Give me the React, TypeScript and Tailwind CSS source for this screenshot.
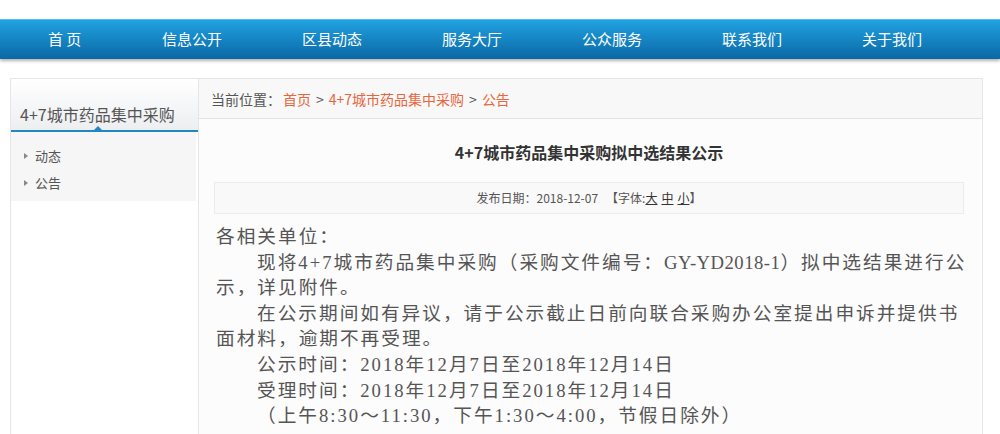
import type { ReactNode } from "react";

const navItems = ["信息公开", "区县动态", "服务大厅", "公众服务", "联系我们", "关于我们"];

const body: { text: ReactNode; indent: boolean }[] = [
  { text: "各相关单位：", indent: false },
  {
    text: (
      <>
        现将4+7城市药品集中采购（采购文件编号：<span className="tracking-[0.5px]">GY-YD2018-1</span>）拟中选结果进行公示，详见附件。
      </>
    ),
    indent: true,
  },
  { text: "在公示期间如有异议，请于公示截止日前向联合采购办公室提出申诉并提供书面材料，逾期不再受理。", indent: true },
  { text: "公示时间：2018年12月7日至2018年12月14日", indent: true },
  { text: "受理时间：2018年12月7日至2018年12月14日", indent: true },
  { text: "（上午8:30～11:30，下午1:30～4:00，节假日除外）", indent: true },
];

export default function App() {
  return (
    <div className="w-[1000px] h-[434px] overflow-hidden bg-white font-['Noto_Sans_CJK_SC',sans-serif]">
      {/* Top navigation */}
      <div className="pt-[19px]">
        <div className="h-[40px] flex items-center bg-linear-to-b from-[#20a2e2] to-[#0b68a4] border-t border-[#5bbbea] shadow-[0_2px_3px_rgba(0,0,0,0.3)] text-white text-[15px]">
          <div className="w-[122px] pl-[48px]">首 页</div>
          {navItems.map((n) => (
            <div key={n} className="w-[140px] text-center">{n}</div>
          ))}
        </div>
      </div>

      {/* Main box */}
      <div className="mt-[19px] ml-[10px] w-[973px] h-[400px] flex border-t border-l border-r border-[#e6e6e6]">
        {/* Sidebar */}
        <div className="w-[188px] border-r border-[#e6e6e6] bg-white">
          <div className="relative h-[53px] flex items-end pl-[9px] pb-[4px] bg-linear-to-b from-[#ffffff] to-[#eceef0] border-b-2 border-[#2387c4]">
            <span className="text-[16px] leading-[24px] text-[#555]">4+7城市药品集中采购</span>
            <span className="absolute left-[83px] bottom-0 w-0 h-0 border-x-[4px] border-x-transparent border-b-[4px] border-b-[#2387c4]" />
          </div>
          <div className="bg-[#f6f6f6] pt-[10px] pb-[5px] mr-[2px]">
            {["动态", "公告"].map((s) => (
              <div key={s} className="h-[27px] flex items-center text-[13px] text-[#555]">
                <span className="ml-[13px] w-0 h-0 border-y-[3px] border-y-transparent border-l-[4px] border-l-[#888]" />
                <span className="ml-[7px]">{s}</span>
              </div>
            ))}
          </div>
        </div>

        {/* Content */}
        <div className="flex-1 bg-[#fcfcfc]">
          <div className="h-[40px] flex items-center pl-[12px] pt-[2px] bg-[#f8f8f8] border-b border-[#e2e2e2] text-[14px] text-[#555]">
            <span>当前位置：</span>
            <span className="ml-[2px] text-[#e8663d]">首页</span>
            <span className="mx-[5px]">&gt;</span>
            <span className="text-[#e8663d]">4+7城市药品集中采购</span>
            <span className="mx-[5px]">&gt;</span>
            <span className="text-[#e8663d]">公告</span>
          </div>

          <div className="pl-[15px]">
            <h1 className="w-[750px] pt-[21px] mb-[18px] text-center text-[16px] leading-[24px] font-bold text-[#333]">
              4+7城市药品集中采购拟中选结果公示
            </h1>
            <div className="w-[750px] h-[32px] flex items-center justify-center border border-[#ececec] bg-[#f9f9f9] text-[12px] text-[#555]">
              <span>发布日期：2018-12-07</span>
              <span className="ml-[8px]">【字体:</span>
              <span className="underline text-[#333]">大</span>
              <span className="ml-[4px] underline text-[#333]">中</span>
              <span className="ml-[4px] underline text-[#333]">小</span>
              <span>】</span>
            </div>
            <div className="w-[762px] mt-[10px] pl-[2px] font-['Liberation_Serif','Noto_Sans_CJK_SC',serif] text-[18.67px] leading-[25.6px] tracking-[2px] text-[#555]">
              {body.map((p, i) => (
                <p key={i} className={p.indent ? "indent-[41px]" : ""}>{p.text}</p>
              ))}
            </div>
          </div>
        </div>
      </div>
    </div>
  );
}
